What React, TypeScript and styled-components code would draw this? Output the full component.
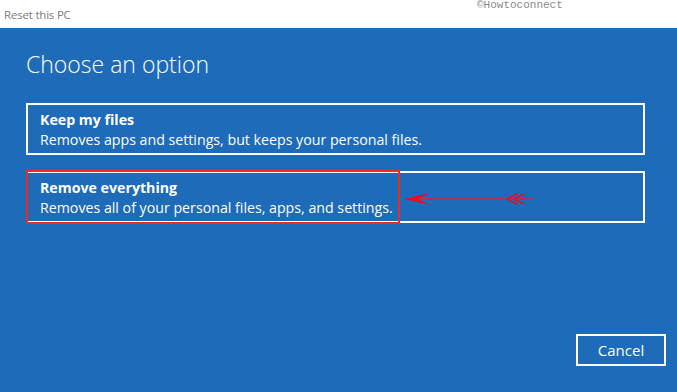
import styled, { createGlobalStyle } from "styled-components";

const GlobalStyle = createGlobalStyle`
  html, body {
    margin: 0;
    padding: 0;
    background: #ffffff;
  }
  #root {
    width: 677px;
    height: 392px;
  }
`;

const App = () => {
  return (
    <Page>
      <GlobalStyle />
      <TopBar>
        <WindowTitle>Reset this PC</WindowTitle>
        <Watermark>©Howtoconnect</Watermark>
      </TopBar>
      <Screen>
        <Heading>Choose an option</Heading>
        <Options>
          <OptionCard>
            <OptionTitle>Keep my files</OptionTitle>
            <OptionText>
              Removes apps and settings, but keeps your personal files.
            </OptionText>
          </OptionCard>
          <OptionCard>
            <Highlight />
            <OptionTitle>Remove everything</OptionTitle>
            <OptionText>
              Removes all of your personal files, apps, and settings.
            </OptionText>
            <Arrow width="134" height="16" viewBox="0 0 134 16">
              <line x1="6" y1="8" x2="130" y2="8" stroke="#e0202a" strokeWidth="1.6" />
              <path d="M0 8 L26 2 L14 8 L26 14 Z" fill="#e8101c" />
              <path d="M103 8 L113 3 M103 8 L113 13 M110 8 L120 3 M110 8 L120 13" stroke="#e8101c" strokeWidth="1.4" fill="none" />
            </Arrow>
          </OptionCard>
        </Options>
        <Footer>
          <CancelButton>Cancel</CancelButton>
        </Footer>
      </Screen>
    </Page>
  );
};

const Page = styled.div`
  display: flex;
  flex-direction: column;
  width: 677px;
  height: 392px;
  overflow: hidden;
`;

const TopBar = styled.div`
  position: relative;
  height: 28px;
  background: #ffffff;
  display: flex;
  align-items: center;
  padding-left: 4px;
`;

const WindowTitle = styled.span`
  font-family: "Open Sans", "Noto Sans", sans-serif;
  font-size: 11.5px;
  color: #7d7d7d;
  letter-spacing: -0.2px;
`;

const Watermark = styled.span`
  position: absolute;
  left: 477px;
  top: -1px;
  font-family: "Liberation Mono", monospace;
  font-size: 11px;
  color: #8a8a8a;
`;

const Screen = styled.div`
  flex: 1;
  background: #1e6bba;
  display: flex;
  flex-direction: column;
  padding: 20px 11px 26px 26px;
`;

const Heading = styled.h1`
  margin: 0;
  font-family: "Open Sans", "Noto Sans", sans-serif;
  font-weight: 300;
  font-size: 23px;
  line-height: 32px;
  color: #ffffff;
`;

const Options = styled.div`
  display: flex;
  flex-direction: column;
  gap: 16px;
  margin-top: 23px;
  margin-right: 21px;
`;

const OptionCard = styled.div`
  position: relative;
  height: 52px;
  box-sizing: border-box;
  border: 2px solid #ffffff;
  padding: 5px 12px 0 12px;
  display: flex;
  flex-direction: column;
  color: #ffffff;
  font-family: "Open Sans", "Noto Sans", sans-serif;
`;

const Highlight = styled.div`
  position: absolute;
  left: -2px;
  top: -3px;
  width: 374px;
  height: 54px;
  border: 2px solid #f02a1c;
  box-sizing: border-box;
`;

const OptionTitle = styled.div`
  font-weight: 700;
  font-size: 14.2px;
  line-height: 20px;
`;

const OptionText = styled.div`
  font-size: 14.2px;
  line-height: 19px;
`;

const Arrow = styled.svg`
  position: absolute;
  left: 376px;
  top: 18px;
`;

const Footer = styled.div`
  margin-top: auto;
  display: flex;
  justify-content: flex-end;
`;

const CancelButton = styled.button`
  width: 90px;
  height: 32px;
  background: transparent;
  border: 2px solid #ffffff;
  color: #ffffff;
  font-family: "Open Sans", "Noto Sans", sans-serif;
  font-size: 15px;
  padding: 0;
`;

export default App;
